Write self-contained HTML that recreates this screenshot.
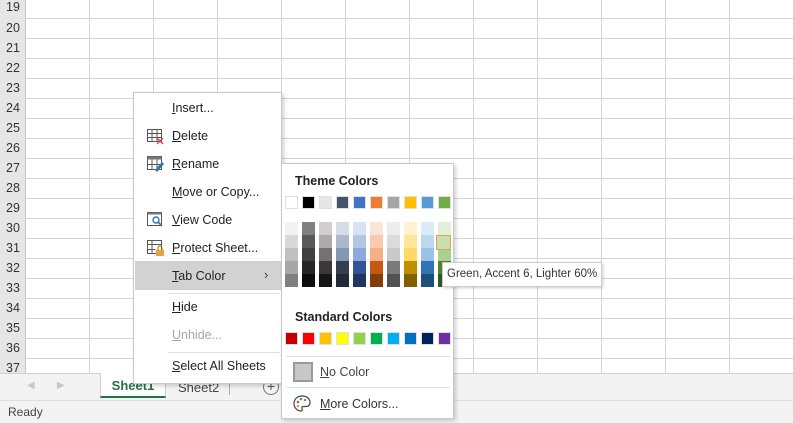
<!DOCTYPE html><html><head><style>
*{margin:0;padding:0;box-sizing:border-box}
body{width:793px;height:423px;overflow:hidden;background:#fff;font-family:"Liberation Sans",sans-serif;font-size:12px;color:#222;position:relative}
.a{position:absolute}
.grid{left:0;top:0;width:793px;height:373px;background-image:linear-gradient(to right,#d4d4d4 1px,transparent 1px),linear-gradient(to bottom,#d4d4d4 1px,transparent 1px);background-size:64px 20px;background-position:25px 18px}
.rh{left:0;top:0;width:26px;height:373px;background:#e6e6e6;border-right:1px solid #c6c6c6}
.rn{position:absolute;left:0;width:26px;text-align:center;font-size:12.5px;color:#333}
.menu{background:#fff;border:1px solid #c8c8c8;box-shadow:2px 2px 4px rgba(0,0,0,.18)}
.it{position:absolute;left:38px;font-size:12.5px;color:#222;white-space:nowrap}
.sw{position:absolute;width:13px;height:13px;border:1px solid #e0e0e0}
.sep{position:absolute;height:1px;background:#e1e1e1}
</style></head><body>
<div class="a grid"></div>
<div class="a rh">
<div class="rn" style="top:0">19</div><div class="rn" style="top:21px">20</div><div class="rn" style="top:41px">21</div><div class="rn" style="top:61px">22</div><div class="rn" style="top:81px">23</div><div class="rn" style="top:101px">24</div><div class="rn" style="top:121px">25</div><div class="rn" style="top:141px">26</div><div class="rn" style="top:161px">27</div><div class="rn" style="top:181px">28</div><div class="rn" style="top:201px">29</div><div class="rn" style="top:221px">30</div><div class="rn" style="top:241px">31</div><div class="rn" style="top:261px">32</div><div class="rn" style="top:281px">33</div><div class="rn" style="top:301px">34</div><div class="rn" style="top:321px">35</div><div class="rn" style="top:341px">36</div><div class="rn" style="top:361px">37</div>
</div>
<div class="a" style="left:0;top:373px;width:793px;height:27px;background:#f3f3f3;border-top:1px solid #d0d0d0"></div>
<div class="a" style="left:27px;top:380px;color:#c8c8c8;font-size:10px">◀&nbsp;&nbsp;&nbsp;&nbsp;&nbsp;&nbsp;&nbsp;&nbsp;▶</div>
<div class="a" style="left:100px;top:373px;width:66px;height:25px;background:#fff;border-bottom:2px solid #217346;border-left:1px solid #ccc;border-right:1px solid #ccc;color:#217346;font-weight:bold;font-size:13px;text-align:center;line-height:26px">Sheet1</div>
<div class="a" style="left:178px;top:380px;font-size:13px;color:#444">Sheet2</div>
<div class="a" style="left:229px;top:377px;width:1px;height:18px;background:#aaa"></div>
<div class="a" style="left:263px;top:379px;width:16px;height:16px;border:1px solid #777;border-radius:50%;text-align:center;line-height:13px;font-size:14px;color:#555">+</div>
<div class="a" style="left:0;top:400px;width:793px;height:23px;background:#f3f3f3;border-top:1px solid #e0e0e0"></div>
<div class="a" style="left:8px;top:405px;font-size:12px;color:#444">Ready</div>

<div class="a menu" style="left:133px;top:92px;width:149px;height:292px">
<div class="a" style="left:1px;top:168px;width:146px;height:29px;background:#d2d2d2"></div>
<div class="it" style="top:8px"><u>I</u>nsert...</div>
<div class="it" style="top:36px"><u>D</u>elete</div>
<div class="it" style="top:64px"><u>R</u>ename</div>
<div class="it" style="top:92px"><u>M</u>ove or Copy...</div>
<div class="it" style="top:120px"><u>V</u>iew Code</div>
<div class="it" style="top:148px"><u>P</u>rotect Sheet...</div>
<div class="it" style="top:176px"><u>T</u>ab Color</div>
<div class="a" style="left:130px;top:174px;font-size:13px;color:#444">›</div>
<div class="sep" style="left:34px;top:200px;width:112px"></div>
<div class="it" style="top:207px"><u>H</u>ide</div>
<div class="it" style="top:235px;color:#a6a6a6"><u>U</u>nhide...</div>
<div class="sep" style="left:34px;top:259px;width:112px"></div>
<div class="it" style="top:266px"><u>S</u>elect All Sheets</div>
<svg class="a" style="left:13px;top:36px" width="18" height="16"><rect x=".5" y=".5" width="14" height="12" fill="#fff" stroke="#555"/><path d="M.5 4.5h14M5 .5v12M10 .5v12M.5 8.5h14" stroke="#555"/><path d="M10 9l6 6M16 9l-6 6" stroke="#e0413a" stroke-width="1.4"/></svg>
<svg class="a" style="left:13px;top:63px" width="18" height="16"><rect x=".5" y=".5" width="14" height="13" fill="#fff" stroke="#555"/><rect x=".5" y=".5" width="14" height="3" fill="#777"/><path d="M.5 8.5h14M5 3.5v10M10 3.5v10" stroke="#555"/><path d="M8 14l7-8 2 2-7 8z" fill="#2e75b6"/></svg>
<svg class="a" style="left:13px;top:119px" width="18" height="16"><rect x=".5" y=".5" width="14" height="13" fill="#fff" stroke="#555"/><rect x=".5" y=".5" width="14" height="2" fill="#777"/><circle cx="9" cy="8" r="3" fill="none" stroke="#2e75b6" stroke-width="1.4"/><path d="M11 10l4 4" stroke="#2e75b6" stroke-width="1.6"/></svg>
<svg class="a" style="left:13px;top:147px" width="18" height="17"><rect x=".5" y=".5" width="14" height="13" fill="#fff" stroke="#555"/><path d="M.5 4.5h14M5 .5v13M.5 9.5h8" stroke="#555"/><rect x="9" y="10" width="8" height="6" fill="#e8a33c"/><path d="M11 10V8a2 2 0 014 0v2" fill="none" stroke="#b36b00"/></svg>
</div>

<div class="a menu" style="left:281px;top:163px;width:173px;height:256px">
<div class="a" style="left:13px;top:10px;font-weight:bold;font-size:12.5px">Theme Colors</div>
<div id="top"></div>
<div class="a" style="left:13px;top:146px;font-weight:bold;font-size:12.5px">Standard Colors</div>
<div class="sep" style="left:4px;top:192px;width:164px"></div>
<div class="a" style="left:11px;top:198px;width:20px;height:20px;border:2px solid #999;background:#c8c8c8"></div>
<div class="a" style="left:38px;top:201px;font-size:12.5px;color:#444"><u>N</u>o Color</div>
<div class="sep" style="left:4px;top:223px;width:164px"></div>
<svg class="a" style="left:11px;top:231px" width="18" height="17"><path d="M9 1C4 1 1 4.5 1 8.5S4 16 8 16c1.5 0 1.5-1.5 1-2.5s0-2 1.5-2H13c2.5 0 4-1.5 4-4C17 3.5 13.5 1 9 1z" fill="none" stroke="#444" stroke-width="1.2"/><circle cx="5" cy="7" r="1.3" fill="#e04040"/><circle cx="8" cy="4" r="1.3" fill="#3a8ee6"/><circle cx="12" cy="5" r="1.3" fill="#4caf50"/><circle cx="5" cy="11" r="1.3" fill="#f0a020"/></svg>
<div class="a" style="left:38px;top:233px;font-size:12.5px;color:#333;white-space:nowrap"><u>M</u>ore Colors...</div>
</div>
<div class="a" style="left:442px;top:262px;width:160px;height:25px;background:#fff;border:1px solid #ccc;box-shadow:1px 1px 3px rgba(0,0,0,.2);font-size:11.5px;color:#333;line-height:23px;padding-left:4px;white-space:nowrap;overflow:hidden">Green, Accent 6, Lighter 60%</div>
<script>
var th=[["#FFFFFF","#F2F2F2","#D9D9D9","#BFBFBF","#A6A6A6","#808080"],["#000000","#808080","#595959","#404040","#262626","#0D0D0D"],["#E7E6E6","#D0CECE","#AEAAAA","#757171","#3B3838","#171616"],["#44546A","#D6DCE4","#ADB9CA","#8497B0","#333F4F","#222A35"],["#4472C4","#D9E1F2","#B4C6E7","#8EA9DB","#305496","#203764"],["#ED7D31","#FCE4D6","#F8CBAD","#F4B084","#C65911","#833C0B"],["#A5A5A5","#EDEDED","#DBDBDB","#C9C9C9","#7B7B7B","#525252"],["#FFC000","#FFF2CC","#FFE699","#FFD966","#BF8F00","#806000"],["#5B9BD5","#DDEBF7","#BDD7EE","#9BC2E6","#2F75B5","#1F4E78"],["#70AD47","#E2EFDA","#C6E0B4","#A9D08E","#548235","#375623"]];
var st=["#C00000","#FF0000","#FFC000","#FFFF00","#92D050","#00B050","#00B0F0","#0070C0","#002060","#7030A0"];
var h="";
for(var i=0;i<10;i++){var x=3+i*17;
h+='<div class="sw" style="left:'+x+'px;top:32px;background:'+th[i][0]+'"></div>';
for(var j=1;j<6;j++)h+='<div class="a" style="left:'+x+'px;top:'+(58+(j-1)*13)+'px;width:13px;height:13px;background:'+th[i][j]+'"></div>';
h+='<div class="sw" style="left:'+x+'px;top:168px;background:'+st[i]+'"></div>';}
h+='<div class="a" style="left:154px;top:71px;width:15px;height:15px;border:1.5px solid #e4a44a;background:#C6E0B4"></div>';
document.getElementById("top").outerHTML=h;
</script>
</body></html>
